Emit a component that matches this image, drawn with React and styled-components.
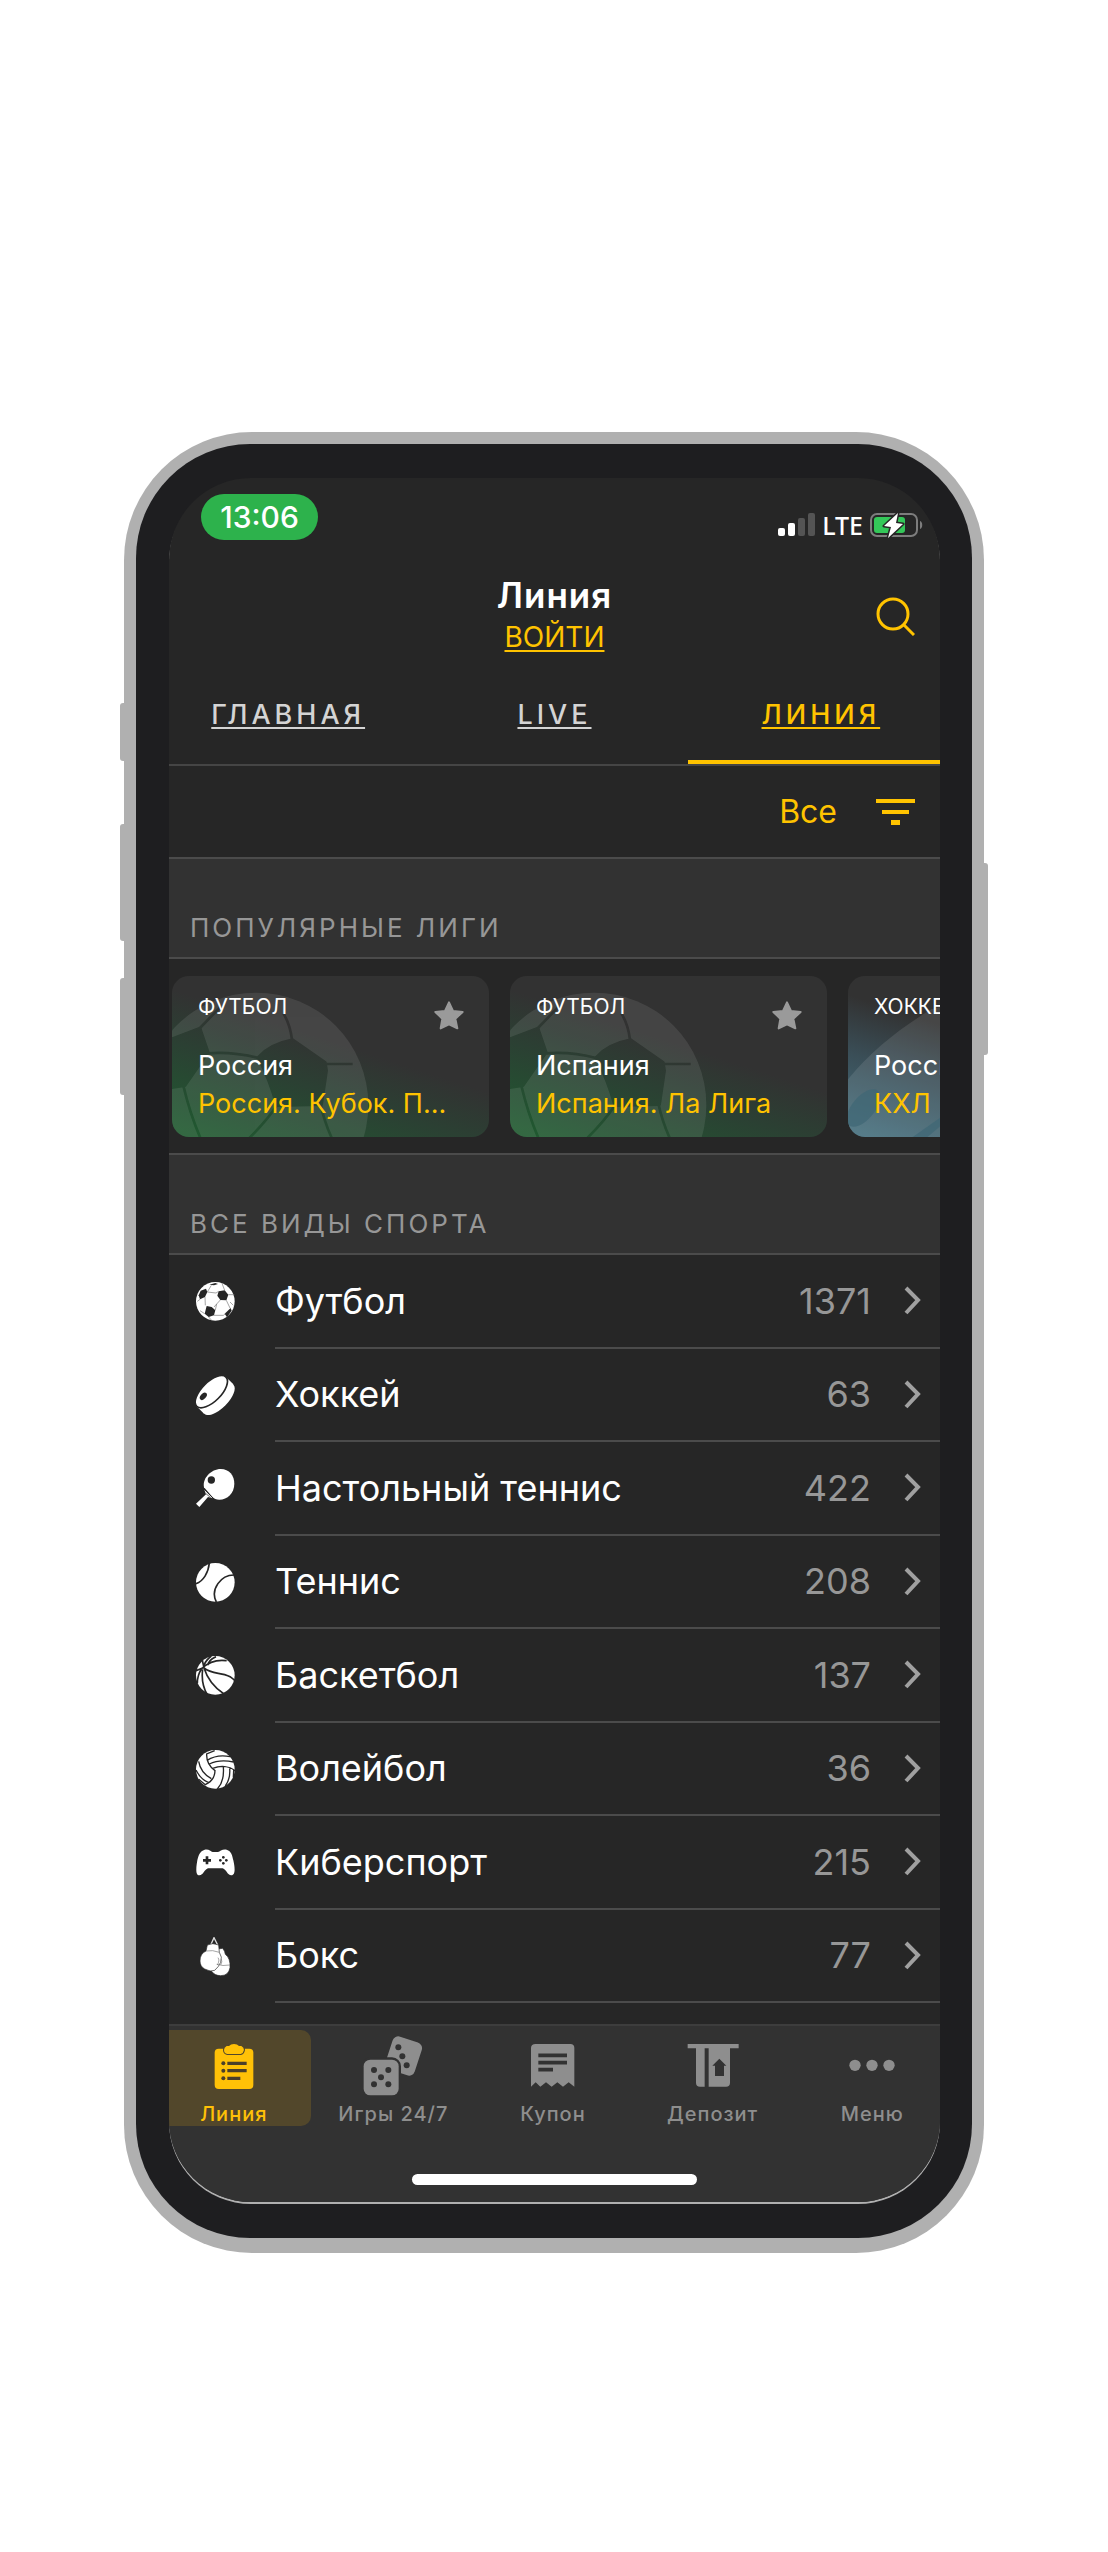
import React, { useState } from 'react'
import styled, { createGlobalStyle } from 'styled-components'

const colors = {
  screen: '#262626',
  panel: '#323232',
  line: '#4b4b4b',
  accent: '#ffc107',
  yellow: '#ffc300',
  muted: '#979797',
  frame: '#b0b0b0',
  bezel: '#1e1e20',
}

const tabs = ['ГЛАВНАЯ', 'LIVE', 'ЛИНИЯ']

const leagues = [
  { id: 1, sport: 'ФУТБОЛ', country: 'Россия', league: 'Россия. Кубок. П...', kind: 'football' },
  { id: 2, sport: 'ФУТБОЛ', country: 'Испания', league: 'Испания. Ла Лига', kind: 'football' },
  { id: 3, sport: 'ХОККЕЙ', country: 'Россия', league: 'КХЛ', kind: 'hockey' },
]

const sports = [
  { name: 'Футбол', count: 1371, icon: FootballIcon },
  { name: 'Хоккей', count: 63, icon: PuckIcon },
  { name: 'Настольный теннис', count: 422, icon: PaddleIcon },
  { name: 'Теннис', count: 208, icon: TennisIcon },
  { name: 'Баскетбол', count: 137, icon: BasketballIcon },
  { name: 'Волейбол', count: 36, icon: VolleyballIcon },
  { name: 'Киберспорт', count: 215, icon: GamepadIcon },
  { name: 'Бокс', count: 77, icon: GlovesIcon },
]

const menu = [
  { name: 'Линия', icon: ClipboardIcon },
  { name: 'Игры 24/7', icon: DiceIcon },
  { name: 'Купон', icon: ReceiptIcon },
  { name: 'Депозит', icon: DepositIcon },
  { name: 'Меню', icon: DotsIcon },
]

function App() {
  const [tab, setTab] = useState('ЛИНИЯ')
  const [section, setSection] = useState('Линия')

  return (
    <Page>
      <GlobalStyle />
      <Phone>
        <SideButton $side='left' $top={271} $height={58} />
        <SideButton $side='left' $top={392} $height={117} />
        <SideButton $side='left' $top={546} $height={117} />
        <SideButton $side='right' $top={431} $height={192} />
        <Bezel>
          <Screen>
            <StatusBar>
              <Clock>13:06</Clock>
              <StatusIcons>
                <SignalIcon />
                <Network>LTE</Network>
                <BatteryIcon />
              </StatusIcons>
            </StatusBar>

            <Header>
              <Heading>
                <h1>Линия</h1>
                <a href='#login'>ВОЙТИ</a>
              </Heading>
              <IconButton aria-label='Поиск'>
                <SearchIcon />
              </IconButton>
            </Header>

            <Tabs>
              {tabs.map((name) => (
                <Tab key={name} href='#tab' $active={name === tab} onClick={() => setTab(name)}>
                  {name}
                </Tab>
              ))}
            </Tabs>

            <FilterBar>
              <FilterButton>Все</FilterButton>
              <IconButton aria-label='Фильтр'>
                <FilterIcon />
              </IconButton>
            </FilterBar>

            <SectionTitle>ПОПУЛЯРНЫЕ ЛИГИ</SectionTitle>
            <Leagues>
              {leagues.map(({ id, sport, country, league, kind }) => (
                <Card key={id} $kind={kind}>
                  <CardArt>{kind === 'football' ? <BallArt id={id} /> : <PuckArt />}</CardArt>
                  <CardTop>
                    <CardSport>{sport}</CardSport>
                    <StarButton aria-label='В избранное'>
                      <StarIcon />
                    </StarButton>
                  </CardTop>
                  <CardText>{country}</CardText>
                  <CardText $accent>{league}</CardText>
                </Card>
              ))}
            </Leagues>

            <SectionTitle>ВСЕ ВИДЫ СПОРТА</SectionTitle>
            <SportList>
              {sports.map(({ name, count, icon: Icon }) => (
                <li key={name}>
                  <SportRow href='#sport'>
                    <SportIcon viewBox='0 0 117 117'>
                      <Icon />
                    </SportIcon>
                    <SportBody>
                      <SportName>{name}</SportName>
                      <SportCount>{count}</SportCount>
                      <ChevronIcon />
                    </SportBody>
                  </SportRow>
                </li>
              ))}
            </SportList>

            <Footer>
              <BottomNav>
                {menu.map(({ name, icon: Icon }) => (
                  <NavButton key={name} $active={name === section} onClick={() => setSection(name)}>
                    <NavIcon viewBox='0 0 180 180'>
                      <Icon />
                    </NavIcon>
                    <span>{name}</span>
                  </NavButton>
                ))}
              </BottomNav>
              <HomeIndicator />
            </Footer>
          </Screen>
        </Bezel>
      </Phone>
    </Page>
  )
}

export default App

/* status bar and toolbar icons */

function SignalIcon() {
  return (
    <svg width='37' height='24' viewBox='0 0 37 24'>
      <rect x='0' y='15' width='7' height='8' rx='2' fill='#fff' />
      <rect x='10' y='10' width='7' height='13' rx='2' fill='#fff' />
      <rect x='20' y='5' width='7' height='18' rx='2' fill='#545454' />
      <rect x='30' y='0' width='7' height='23' rx='2' fill='#545454' />
    </svg>
  )
}

function BatteryIcon() {
  return (
    <svg width='53' height='26' viewBox='0 0 53 26'>
      <rect x='1' y='2' width='46' height='22' rx='6' fill='none' stroke='#7d7d7d' strokeWidth='2' />
      <path d='M50 9 C53 10 53 16 50 17 Z' fill='#7d7d7d' />
      <rect x='4' y='5' width='31' height='16' rx='3' fill='#34c759' />
      <path
        d='M28 1 L14 14 L21 15 L18 26 L33 12 L26 11 Z'
        fill='#fff'
        stroke='#262626'
        strokeWidth='3'
        strokeLinejoin='round'
        paintOrder='stroke'
      />
    </svg>
  )
}

function SearchIcon() {
  return (
    <svg width='39' height='39' viewBox='0 0 39 39' fill='none' stroke={colors.yellow} strokeWidth='3'>
      <circle cx='17' cy='17' r='15' />
      <path d='M28 28 L38 38' />
    </svg>
  )
}

function FilterIcon() {
  return (
    <svg width='39' height='26' viewBox='0 0 39 26' fill={colors.yellow}>
      <rect x='0' y='0' width='39' height='4' />
      <rect x='6' y='11' width='27' height='4' />
      <rect x='15' y='21' width='9' height='5' />
    </svg>
  )
}

function StarIcon() {
  return (
    <svg width='30' height='30' viewBox='0 0 90 90'>
      <path
        d='M45 4 L57 30 L86 33 L64 53 L70 82 L45 70 L20 82 L25 53 L4 33 L33 30 Z'
        fill='#9a9a9a'
        stroke='#9a9a9a'
        strokeWidth='6'
        strokeLinejoin='round'
      />
    </svg>
  )
}

function ChevronIcon() {
  return (
    <svg width='17' height='29' viewBox='0 0 17 29' fill='none' stroke='#a0a0a0' strokeWidth='4'>
      <path d='M2 2 L14 14 L2 27' />
    </svg>
  )
}

/* card backgrounds */

function BallArt({ id }) {
  return (
    <svg width='200' height='162' viewBox='6 16 600 486'>
      <mask id={`ball-${id}`} maskUnits='userSpaceOnUse' x='0' y='0' width='620' height='520'>
        <circle cx='258' cy='403' r='337' fill='#fff' />
        <g stroke='#000' strokeWidth='8' strokeLinejoin='round'>
          <path d='M368 207 L466 275 L470 300 L455 402 L320 405 Q300 330 264 260 Q300 220 368 207 Z' />
          <path d='M0 206 L90 172 L115 245 L45 345 L0 352 Z' />
          <path
            d='M90 172 L150 110 M112 248 Q190 242 264 262 M366 207 Q360 160 340 128 M466 280 L548 280 M40 345 Q60 430 92 504 M320 405 Q290 450 236 504 M452 402 Q462 450 486 504'
            fill='none'
          />
        </g>
      </mask>
      <rect x='0' y='0' width='620' height='520' fill='#fff' opacity='0.09' mask={`url(#ball-${id})`} />
    </svg>
  )
}

function PuckArt() {
  return (
    <svg width='200' height='162' viewBox='0 0 600 486'>
      <path d='M0 310 C70 225 150 160 250 100 L420 60 L600 200 L600 486 L0 486 Z' fill='#fff' opacity='0.1' />
      <ellipse cx='46' cy='396' rx='68' ry='34' transform='rotate(-50 46 396)' fill='#3f6675' opacity='0.7' />
      <path d='M190 486 L290 415 L290 440 L235 486 Z' fill='#3f6675' opacity='0.7' />
    </svg>
  )
}

/* sport icons, all drawn in a 117 box */

function FootballIcon() {
  return (
    <>
      <circle cx='58' cy='58' r='58' fill='#fff' />
      <g fill={colors.screen}>
        <path d='M68 28 L86 25 L97 38 L91 55 L73 54 L64 41 Z' />
        <path d='M32 72 L47 75 L58 85 L54 100 L38 105 L26 95 Z' />
        <path d='M14 26 L30 20 L34 30 L27 45 L12 52 L8 40 Z' />
        <path d='M86 95 L104 78 L107 86 L93 106 Z' />
        <path d='M40 8 L58 3 L66 6 L54 10 Z' />
      </g>
      <path
        d='M34 30 L60 33 L68 28 M86 25 L78 4 M97 38 L115 38 M91 55 L102 78 M73 54 L62 66 L58 84 M62 66 L54 75 M27 45 L28 70 M12 52 L4 58 M34 30 L46 10 M54 100 L82 100 L88 95 M38 105 L46 114 M26 95 L12 86 M102 60 L112 70'
        fill='none'
        stroke='#777'
        strokeWidth='2'
      />
    </>
  )
}

function PuckIcon() {
  return (
    <>
      <path d='M90 3 L112 25 L24 113 L2 91 Z' fill='#fff' />
      <ellipse cx='68' cy='69' rx='62' ry='28' transform='rotate(-45 68 69)' fill='#fff' />
      <ellipse
        cx='46'
        cy='47'
        rx='62'
        ry='29'
        transform='rotate(-45 46 47)'
        fill='#fff'
        stroke={colors.screen}
        strokeWidth='5'
      />
      <ellipse cx='22' cy='61' rx='13' ry='8' transform='rotate(-48 22 61)' fill={colors.screen} />
    </>
  )
}

function PaddleIcon() {
  return (
    <>
      <path
        d='M24 55 C18 28 46 0 74 0 C100 0 115 20 115 44 C115 72 94 92 70 92 C60 92 55 90 50 85 Z'
        fill='#fff'
      />
      <path d='M25 62 L50 88 L36 84 L10 114 L0 104 L30 76 Z' fill='#fff' />
      <path d='M20 56 L58 94' stroke={colors.screen} strokeWidth='3' />
      <path d='M30 74 L44 86' stroke={colors.screen} strokeWidth='2' />
      <circle cx='46' cy='33' r='11' fill={colors.screen} />
    </>
  )
}

function TennisIcon() {
  return (
    <>
      <circle cx='58' cy='58' r='58' fill='#fff' />
      <path
        d='M40 0 C37 30 22 54 0 62 M117 36 C74 34 42 80 61 117'
        fill='none'
        stroke={colors.screen}
        strokeWidth='5'
      />
    </>
  )
}

function BasketballIcon() {
  return (
    <>
      <circle cx='58' cy='58' r='58' fill='#fff' />
      <path
        d='M0 44 L18 37 C36 20 62 10 92 14 M22 36 C24 22 30 12 46 0 M18 8 L24 36 C44 52 66 50 86 56 C100 60 110 66 117 74 M24 36 C34 68 54 94 84 114 M20 40 C16 70 22 96 34 117 M16 40 C8 52 4 66 4 82 M36 28 C36 18 42 10 60 2'
        fill='none'
        stroke={colors.screen}
        strokeWidth='5'
      />
    </>
  )
}

function VolleyballIcon() {
  return (
    <>
      <circle cx='58' cy='58' r='58' fill='#fff' />
      <path
        d='M56 2 L32 12 C31 34 40 50 57 62 M50 55 C74 46 100 48 117 62 M57 60 C57 80 46 96 28 104 L8 88 M33 31 C54 18 78 15 102 20 M40 42 C60 32 90 31 113 36 M8 34 C12 58 28 76 46 86 M0 60 C8 76 22 92 38 98 M82 51 C84 76 80 100 64 117 M101 55 C103 76 98 94 88 108 M113 60 L112 82'
        fill='none'
        stroke={colors.screen}
        strokeWidth='4'
      />
    </>
  )
}

function GamepadIcon() {
  return (
    <>
      <path
        d='M26 20 C38 17 44 25 50 27 L66 27 C72 25 80 17 92 20 C106 24 109 38 112 52 C117 74 119 97 106 97 C94 97 92 80 80 76 L36 76 C24 80 22 97 10 97 C-2 97 0 74 4 52 C7 38 12 24 26 20 Z'
        fill='#fff'
      />
      <path d='M33 40 V64 M21 52 H45' stroke={colors.screen} strokeWidth='8' />
      <g fill={colors.screen}>
        <circle cx='82' cy='43' r='4' />
        <circle cx='82' cy='61' r='4' />
        <circle cx='73' cy='52' r='4' />
        <circle cx='91' cy='52' r='4' />
      </g>
    </>
  )
}

function GlovesIcon() {
  return (
    <>
      <path d='M44 24 L54 2 L65 24' fill='none' stroke='#ddd' strokeWidth='4' />
      <g fill='#fff' stroke={colors.screen} strokeWidth='2'>
        <path d='M66 36 L80 34 Q88 44 88 52 Q104 64 102 92 Q98 116 74 116 Q56 116 46 102 Z' />
        <path d='M34 24 Q50 16 68 24 L70 46 Q80 60 74 76 Q68 90 56 100 Q44 106 26 96 Q12 88 12 72 Q12 50 30 42 Z' />
      </g>
      <path
        d='M30 42 Q50 38 70 46 M66 62 Q72 70 64 84 M76 66 Q80 74 74 84 M62 82 Q80 88 102 84'
        fill='none'
        stroke='#777'
        strokeWidth='2'
      />
    </>
  )
}

/* bottom bar icons, drawn in a 180 box with the current text colour */

function ClipboardIcon() {
  return (
    <>
      <rect x='32' y='38' width='116' height='121' rx='12' fill='currentColor' />
      <path
        d='M75 30 Q80 24 90 24 Q100 24 105 30 L112 30 Q120 34 120 42 Q118 52 110 54 L70 54 Q60 52 60 42 Q60 34 68 30 Z'
        fill='currentColor'
        stroke='#52472b'
        strokeWidth='6'
        paintOrder='stroke'
      />
      <path d='M70 82 H128 M70 104 H128 M70 127 H109' stroke='#4a3f2a' strokeWidth='10' />
      <g fill='#4a3f2a'>
        <circle cx='58' cy='82' r='6' />
        <circle cx='58' cy='104' r='6' />
        <circle cx='58' cy='127' r='6' />
      </g>
    </>
  )
}

function DiceIcon() {
  return (
    <>
      <rect x='76' y='8' width='92' height='104' rx='18' transform='rotate(18 122 60)' fill='currentColor' />
      <g fill={colors.panel}>
        <circle cx='106' cy='34' r='9' />
        <circle cx='118' cy='61' r='9' />
        <circle cx='131' cy='88' r='9' />
      </g>
      <rect
        x='2'
        y='71'
        width='105'
        height='107'
        rx='20'
        fill='currentColor'
        stroke={colors.panel}
        strokeWidth='14'
        paintOrder='stroke'
      />
      <g fill={colors.panel}>
        <circle cx='33' cy='102' r='9' />
        <circle cx='76' cy='102' r='9' />
        <circle cx='54' cy='124' r='9' />
        <circle cx='33' cy='145' r='9' />
        <circle cx='76' cy='145' r='9' />
      </g>
    </>
  )
}

function ReceiptIcon() {
  return (
    <>
      <path
        d='M38 24 H142 Q154 24 154 36 V152 L137 139 L120 152 L103 139 L86 152 L69 139 L52 152 L38 139 L24 152 V36 Q24 24 38 24 Z'
        fill='currentColor'
      />
      <path d='M46 58 H132 M46 80 H132 M46 101 H90' stroke={colors.panel} strokeWidth='11' />
    </>
  )
}

function DepositIcon() {
  return (
    <>
      <path d='M14 24 H167 V37 H141 V140 Q141 152 129 152 H77 V37 H65 V152 H51 Q39 152 39 140 V37 H14 Z' fill='currentColor' />
      <path d='M109 68 L130 89 H123 V120 H96 V89 H88 Z' fill={colors.panel} />
    </>
  )
}

function DotsIcon() {
  return (
    <g fill='currentColor'>
      <circle cx='39' cy='88' r='17' />
      <circle cx='90' cy='88' r='17' />
      <circle cx='141' cy='88' r='17' />
    </g>
  )
}

const GlobalStyle = createGlobalStyle`
  * {
    box-sizing: border-box;
  }
  body {
    margin: 0;
    background: #fff;
    font-family: Inter, 'Noto Sans', sans-serif;
  }
  h1, h2, p, ul {
    margin: 0;
    padding: 0;
  }
  a {
    color: inherit;
  }
  button {
    padding: 0;
    border: 0;
    background: none;
    color: inherit;
    font: inherit;
    cursor: pointer;
  }
  svg {
    display: block;
    flex-shrink: 0;
  }
`

const Page = styled.main`
  padding: 432px 124px 298px;
`

const Phone = styled.div`
  position: relative;
  padding: 12px 12px 15px;
  border-radius: 128px;
  background: ${colors.frame};
`

const SideButton = styled.span`
  position: absolute;
  top: ${({ $top }) => $top}px;
  ${({ $side }) => $side}: -4px;
  width: 8px;
  height: ${({ $height }) => $height}px;
  border-radius: 3px;
  background: ${colors.frame};
`

const Bezel = styled.div`
  position: relative;
  padding: 34px 32px 36px 33px;
  border-radius: 114px;
  background: ${colors.bezel};
`

const Screen = styled.div`
  overflow: hidden;
  border-radius: 82px;
  background: ${colors.screen};
  box-shadow: 0 2px 0 ${colors.frame};
  color: #fff;
`

const StatusBar = styled.div`
  display: flex;
  justify-content: space-between;
  align-items: flex-start;
  height: 96px;
  padding: 16px 17px 0 32px;
`

const Clock = styled.time`
  display: flex;
  justify-content: center;
  align-items: center;
  width: 117px;
  height: 46px;
  border-radius: 23px;
  background: #2db24c;
  font-size: 30px;
  font-weight: 500;
`

const StatusIcons = styled.div`
  display: flex;
  align-items: center;
  gap: 7px;
  padding-top: 17px;
`

const Network = styled.span`
  font-family: 'Noto Sans', sans-serif;
  font-size: 25px;
  font-weight: 500;
  line-height: 28px;
`

const Header = styled.header`
  display: grid;
  grid-template-columns: 1fr auto 1fr;
  align-items: center;
  height: 82px;
  padding: 0 25px;
`

const Heading = styled.div`
  display: flex;
  flex-direction: column;
  grid-column: 2;
  align-items: center;

  h1 {
    font-size: 35px;
    font-weight: 600;
    line-height: 42px;
    letter-spacing: 1px;
  }

  a {
    color: ${colors.yellow};
    font-size: 28px;
    line-height: 42px;
    text-decoration-thickness: 2px;
    text-underline-offset: 3px;
    text-decoration-skip-ink: none;
  }
`

const IconButton = styled.button`
  justify-self: end;
`

const Tabs = styled.nav`
  display: grid;
  grid-template-columns: repeat(3, 1fr);
  height: 110px;
  margin: 0 -14px;
  border-bottom: 2px solid #454545;
`

const Tab = styled.a`
  display: flex;
  justify-content: center;
  align-items: center;
  height: 108px;
  padding-top: 12px;
  border-bottom: 4px solid ${({ $active }) => ($active ? colors.yellow : 'transparent')};
  color: ${({ $active }) => ($active ? colors.yellow : '#d4d4d4')};
  font-size: 27px;
  font-weight: 500;
  letter-spacing: 4px;
  text-decoration-thickness: 2px;
  text-underline-offset: 3px;
`

const FilterBar = styled.div`
  display: flex;
  justify-content: flex-end;
  align-items: center;
  gap: 39px;
  height: 91px;
  padding: 0 25px;
  color: ${colors.yellow};
`

const FilterButton = styled.button`
  font-size: 32px;
`

const SectionTitle = styled.h2`
  height: 102px;
  padding: 53px 21px 0;
  border-top: 2px solid ${colors.line};
  border-bottom: 2px solid ${colors.line};
  background: ${colors.panel};
  color: ${colors.muted};
  font-size: 26px;
  font-weight: 400;
  line-height: 32px;
  letter-spacing: 3px;
`

const Leagues = styled.div`
  display: flex;
  gap: 21px;
  padding: 17px 3px 16px;
  overflow: hidden;
`

const Card = styled.article`
  display: flex;
  flex: none;
  flex-direction: column;
  position: relative;
  width: 317px;
  height: 161px;
  padding: 16px 25px 0 26px;
  overflow: hidden;
  border-radius: 17px;
  background: ${({ $kind }) =>
    $kind === 'football'
      ? 'linear-gradient(18deg, #1f5c30 0%, #2b4033 36%, #323232 56%)'
      : 'linear-gradient(18deg, #44707f 0%, #3a4e57 32%, #323232 54%)'};
`

const CardArt = styled.div`
  position: absolute;
  top: 0;
  left: 0;
`

const CardTop = styled.div`
  display: flex;
  justify-content: space-between;
  position: relative;
  height: 55px;
`

const CardSport = styled.span`
  font-size: 21px;
  line-height: 30px;
`

const StarButton = styled.button`
  align-self: flex-start;
  margin-top: 9px;
`

const CardText = styled.p`
  position: relative;
  overflow: hidden;
  color: ${({ $accent }) => ($accent ? colors.yellow : '#fff')};
  font-size: 27px;
  line-height: 38px;
  white-space: nowrap;
`

const SportList = styled.ul`
  display: grid;
  grid-auto-rows: 1fr;
  min-height: 748px;
  list-style: none;
`

const SportRow = styled.a`
  display: flex;
  align-items: center;
  gap: 40px;
  height: 100%;
  padding-left: 27px;
  text-decoration: none;
`

const SportIcon = styled.svg`
  width: 39px;
  height: 39px;
`

const SportBody = styled.div`
  display: flex;
  flex: 1;
  align-items: center;
  height: 100%;
  padding-right: 19px;
  border-bottom: 2px solid ${colors.line};
  font-size: 36px;
`

const SportName = styled.span`
  flex: 1;
`

const SportCount = styled.span`
  margin-right: 33px;
  color: ${colors.muted};
`

const Footer = styled.footer`
  margin-top: 21px;
  padding-bottom: 17px;
  border-top: 2px solid #3d3d3d;
  background: ${colors.panel};
`

const BottomNav = styled.nav`
  display: grid;
  grid-template-columns: repeat(5, 1fr);
  margin: 0 -12px 0 -15px;
  padding-top: 4px;
`

const NavButton = styled.button`
  display: flex;
  flex-direction: column;
  align-items: center;
  height: 96px;
  margin-right: 3px;
  padding: 6px 0 0 3px;
  border-radius: 10px;
  background: ${({ $active }) => ($active ? '#52472b' : 'transparent')};
  color: ${({ $active }) => ($active ? colors.accent : '#8e8e8e')};
  font-size: 20px;
  font-weight: 500;
  line-height: 36px;
  letter-spacing: 1px;
`

const NavIcon = styled.svg`
  width: 60px;
  height: 60px;
`

const HomeIndicator = styled.div`
  width: 37%;
  height: 11px;
  margin: 48px auto 0;
  border-radius: 6px;
  background: #fff;
`
